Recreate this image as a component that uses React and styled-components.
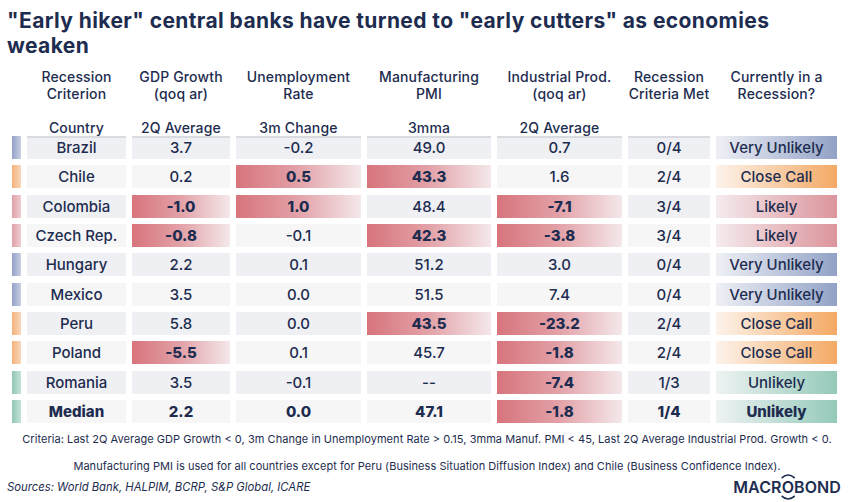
import React from "react";
import styled, { createGlobalStyle, css } from "styled-components";

const NAVY = "#1d2c4f";
const COLS = "9px 99px 98px 125px 124px 125px 82px 121px";

const GlobalStyle = createGlobalStyle`
  html, body { margin: 0; padding: 0; background: #ffffff; }
  body { font-family: Inter, "Open Sans", "Noto Sans", sans-serif; color: ${NAVY}; }
`;

const Page = styled.div`
  width: 850px;
  height: 502px;
  box-sizing: border-box;
  padding: 8px 0 0 0;
  display: flex;
  flex-direction: column;
  overflow: hidden;
  background: #fff;
`;

const Title = styled.h1`
  margin: 0 0 0 7px;
  font-size: 21px;
  line-height: 25px;
  font-weight: 700;
  letter-spacing: 0.4px;
  color: ${NAVY};
`;

const Table = styled.div`
  margin: 10px 0 0 12px;
  display: flex;
  flex-direction: column;
`;

const GridRow = styled.div`
  display: grid;
  grid-template-columns: ${COLS};
  column-gap: 6px;
`;

const HeadRow = styled(GridRow)`
  height: ${(p) => p.$h}px;
  align-items: ${(p) => (p.$top ? "start" : "center")};
`;

const HeadCell = styled.div`
  text-align: center;
  font-size: 14px;
  line-height: 17px;
  font-weight: 500;
  letter-spacing: 0.15px;
  color: ${NAVY};
  white-space: nowrap;
`;

const Body = styled.div`
  display: flex;
  flex-direction: column;
  gap: 6.33px;
`;

const DataRow = styled(GridRow)`
  height: 23px;
`;

const MARKER = {
  blue: "linear-gradient(90deg, #93a2c8, #c9d0e3)",
  orange: "linear-gradient(90deg, #f4b27d, #f9d7bb)",
  red: "linear-gradient(90deg, #e0a0a7, #efcdd1)",
  teal: "linear-gradient(90deg, #92c8b8, #c4e2d9)",
};

const STATUS = {
  blue: "linear-gradient(90deg, #eef0f5, #92a2c6)",
  orange: "linear-gradient(90deg, #fcf3eb, #f4a964)",
  red: "linear-gradient(90deg, #f4ebed, #dc959c)",
  teal: "linear-gradient(90deg, #eef3f3, #95c9b9)",
};

const Marker = styled.div`
  background: ${(p) => MARKER[p.$c]};
`;

const Cell = styled.div`
  display: flex;
  align-items: center;
  justify-content: center;
  font-size: 15px;
  font-weight: ${(p) => (p.$bold ? 800 : 500)};
  color: ${NAVY};
  background: ${(p) => (p.$alt ? "#eff0f3" : "#f6f6f7")};
  white-space: nowrap;
  ${(p) =>
    p.$first &&
    css`
      box-shadow: inset 0 2px 0 #d9dbe0;
    `}
  ${(p) =>
    p.$hot &&
    css`
      background: linear-gradient(90deg, #d8747c 0%, #e2a2a8 50%, #f4e8ea 100%);
    `}
  ${(p) =>
    p.$status &&
    css`
      background: ${STATUS[p.$status]};
    `}
`;

const Notes = styled.div`
  margin-top: 9px;
  display: flex;
  flex-direction: column;
  align-items: center;
  gap: 13px;
  font-size: 11px;
  line-height: 14px;
  font-weight: 400;
  letter-spacing: 0.05px;
  color: ${NAVY};
  padding-left: 4px;
`;

const Foot = styled.div`
  margin-top: 4px;
  display: flex;
  align-items: center;
  justify-content: space-between;
  padding: 0 9px 0 7px;
`;

const Sources = styled.div`
  font-size: 11.3px;
  font-style: italic;
  color: ${NAVY};
`;

const Logo = styled.div`
  font-size: 16px;
  font-weight: 600;
  letter-spacing: 0.1px;
  color: ${NAVY};
  display: flex;
  align-items: center;
`;

const LogoO = styled.span`
  position: relative;
  display: inline-block;
`;

const Arcs = styled.svg`
  position: absolute;
  left: -2px;
  top: -4px;
  width: calc(100% + 4px);
  height: calc(100% + 8px);
  overflow: visible;
`;

const rows = [
  { c: "blue", s: "Very Unlikely", v: ["Brazil", "3.7", "-0.2", "49.0", "0.7", "0/4"], hot: [] },
  { c: "orange", s: "Close Call", v: ["Chile", "0.2", "0.5", "43.3", "1.6", "2/4"], hot: [2, 3] },
  { c: "red", s: "Likely", v: ["Colombia", "-1.0", "1.0", "48.4", "-7.1", "3/4"], hot: [1, 2, 4] },
  { c: "red", s: "Likely", v: ["Czech Rep.", "-0.8", "-0.1", "42.3", "-3.8", "3/4"], hot: [1, 3, 4] },
  { c: "blue", s: "Very Unlikely", v: ["Hungary", "2.2", "0.1", "51.2", "3.0", "0/4"], hot: [] },
  { c: "blue", s: "Very Unlikely", v: ["Mexico", "3.5", "0.0", "51.5", "7.4", "0/4"], hot: [] },
  { c: "orange", s: "Close Call", v: ["Peru", "5.8", "0.0", "43.5", "-23.2", "2/4"], hot: [3, 4] },
  { c: "orange", s: "Close Call", v: ["Poland", "-5.5", "0.1", "45.7", "-1.8", "2/4"], hot: [1, 4] },
  { c: "teal", s: "Unlikely", v: ["Romania", "3.5", "-0.1", "--", "-7.4", "1/3"], hot: [4] },
  { c: "teal", s: "Unlikely", v: ["Median", "2.2", "0.0", "47.1", "-1.8", "1/4"], hot: [4], bold: true },
];

const head1 = [
  ["Recession", "Criterion"],
  ["GDP Growth", "(qoq ar)"],
  ["Unemployment", "Rate"],
  ["Manufacturing", "PMI"],
  ["Industrial Prod.", "(qoq ar)"],
  ["Recession", "Criteria Met"],
  ["Currently in a", "Recession?"],
];
const head2 = ["Country", "2Q Average", "3m Change", "3mma", "2Q Average", "", ""];

export default function App() {
  return (
    <Page>
      <GlobalStyle />
      <Title>
        "Early hiker" central banks have turned to "early cutters" as economies
        <br />
        weaken
      </Title>
      <Table>
        <HeadRow $h={50} $top>
          <div />
          {head1.map((h, i) => (
            <HeadCell key={i}>
              {h[0]}
              <br />
              {h[1]}
            </HeadCell>
          ))}
        </HeadRow>
        <HeadRow $h={18}>
          <div />
          {head2.map((h, i) => (
            <HeadCell key={i}>{h}</HeadCell>
          ))}
        </HeadRow>
        <Body>
          {rows.map((r, ri) => (
            <DataRow key={r.v[0]}>
              <Marker $c={r.c} />
              {r.v.map((val, ci) => (
                <Cell
                  key={ci}
                  $alt={ri % 2 === 0}
                  $first={ri === 0}
                  $hot={r.hot.includes(ci)}
                  $bold={r.bold || r.hot.includes(ci)}
                >
                  {val}
                </Cell>
              ))}
              <Cell $status={r.c} $bold={r.bold}>
                {r.s}
              </Cell>
            </DataRow>
          ))}
        </Body>
      </Table>
      <Notes>
        <div>
          Criteria: Last 2Q Average GDP Growth &lt; 0, 3m Change in Unemployment Rate &gt; 0.15, 3mma Manuf. PMI &lt; 45, Last 2Q
          Average Industrial Prod. Growth &lt; 0.
        </div>
        <div>
          Manufacturing PMI is used for all countries except for Peru (Business Situation Diffusion Index) and Chile (Business
          Confidence Index).
        </div>
      </Notes>
      <Foot>
        <Sources>Sources: World Bank, HALPIM, BCRP, S&amp;P Global, ICARE</Sources>
        <Logo>
          MACR
          <LogoO>
            O
            <Arcs viewBox="0 0 20 28" preserveAspectRatio="none">
              <path d="M2 5 Q10 -1 18 5" fill="none" stroke={NAVY} strokeWidth="1.6" />
              <path d="M2 23 Q10 29 18 23" fill="none" stroke={NAVY} strokeWidth="1.6" />
            </Arcs>
          </LogoO>
          BOND
        </Logo>
      </Foot>
    </Page>
  );
}
